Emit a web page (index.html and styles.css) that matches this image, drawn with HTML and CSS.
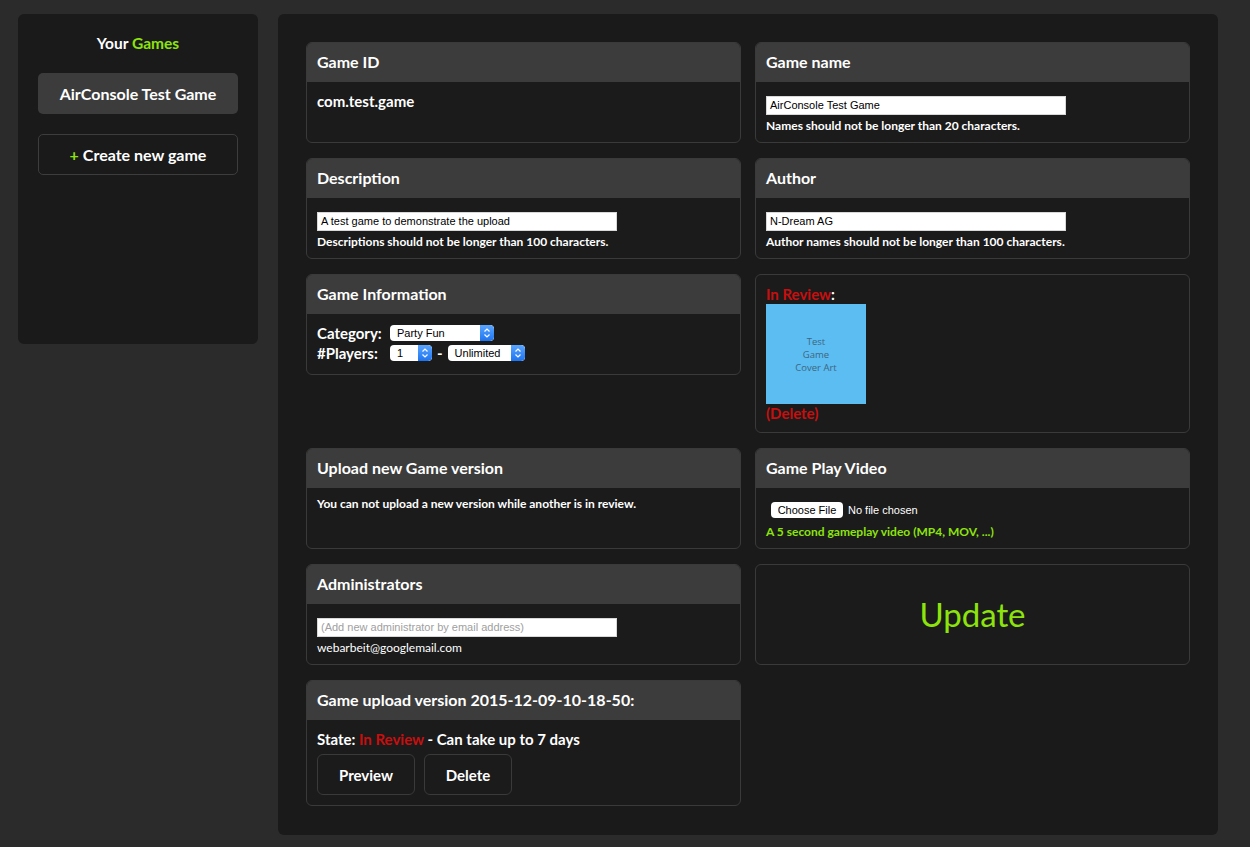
FILE: index.html
```html
<!DOCTYPE html>
<html>
<head>
<meta charset="utf-8">
<link rel="stylesheet" href="styles.css">
</head>
<body>
<div class="page">
  <aside class="sidebar">
    <div class="side-title">Your <span class="green">Games</span></div>
    <div class="side-btn active">AirConsole Test Game</div>
    <div class="side-btn outline"><span class="green plus">+</span> Create new game</div>
  </aside>
  <main class="main">
    <section class="card">
      <div class="card-head">Game ID</div>
      <div class="card-body id-body"><div class="big">com.test.game</div></div>
    </section>
    <section class="card">
      <div class="card-head">Game name</div>
      <div class="card-body">
        <div class="input">AirConsole Test Game</div>
        <div class="hint">Names should not be longer than 20 characters.</div>
      </div>
    </section>
    <section class="card">
      <div class="card-head">Description</div>
      <div class="card-body">
        <div class="input">A test game to demonstrate the upload</div>
        <div class="hint">Descriptions should not be longer than 100 characters.</div>
      </div>
    </section>
    <section class="card">
      <div class="card-head">Author</div>
      <div class="card-body">
        <div class="input">N-Dream AG</div>
        <div class="hint">Author names should not be longer than 100 characters.</div>
      </div>
    </section>
    <section class="card">
      <div class="card-head">Game Information</div>
      <div class="card-body info">
        <div class="info-row">
          <span class="label">Category:</span>
          <span class="select w-cat"><span class="sel-text">Party Fun</span><span class="stepper"><svg width="8" height="12" viewBox="0 0 8 12"><path d="M1.5 4.5 L4 2 L6.5 4.5 M1.5 7.5 L4 10 L6.5 7.5" fill="none" stroke="#fff" stroke-width="1.2"/></svg></span></span>
        </div>
        <div class="info-row">
          <span class="label">#Players:</span>
          <span class="select w-one"><span class="sel-text">1</span><span class="stepper"><svg width="8" height="12" viewBox="0 0 8 12"><path d="M1.5 4.5 L4 2 L6.5 4.5 M1.5 7.5 L4 10 L6.5 7.5" fill="none" stroke="#fff" stroke-width="1.2"/></svg></span></span>
          <span class="dash">-</span>
          <span class="select w-unl"><span class="sel-text">Unlimited</span><span class="stepper"><svg width="8" height="12" viewBox="0 0 8 12"><path d="M1.5 4.5 L4 2 L6.5 4.5 M1.5 7.5 L4 10 L6.5 7.5" fill="none" stroke="#fff" stroke-width="1.2"/></svg></span></span>
        </div>
      </div>
    </section>
    <section class="card plain cover">
      <div class="big"><span class="red">In Review</span>:</div>
      <div class="cover-art">Test<br>Game<br>Cover Art</div>
      <div class="big red">(Delete)</div>
    </section>
    <section class="card">
      <div class="card-head">Upload new Game version</div>
      <div class="card-body notice">
        <div class="hint">You can not upload a new version while another is in review.</div>
      </div>
    </section>
    <section class="card">
      <div class="card-head">Game Play Video</div>
      <div class="card-body">
        <div class="file-row"><span class="file-btn">Choose File</span><span class="file-none">No file chosen</span></div>
        <div class="hint green video-hint">A 5 second gameplay video (MP4, MOV, ...)</div>
      </div>
    </section>
    <section class="card">
      <div class="card-head">Administrators</div>
      <div class="card-body">
        <div class="input placeholder">(Add new administrator by email address)</div>
        <div class="email">webarbeit@googlemail.com</div>
      </div>
    </section>
    <section class="card plain update">
      <div class="update-text">Update</div>
    </section>
    <section class="card">
      <div class="card-head">Game upload version 2015-12-09-10-18-50:</div>
      <div class="card-body version">
        <div class="big">State: <span class="red">In Review</span> - Can take up to 7 days</div>
        <div class="btn-row">
          <span class="btn w-prev">Preview</span>
          <span class="btn w-del">Delete</span>
        </div>
      </div>
    </section>
  </main>
</div>
</body>
</html>
```

FILE: styles.css
```css
* { box-sizing: border-box; }
html, body {
  margin: 0;
  padding: 0;
  background: #2b2b2b;
  color: #ffffff;
  font-family: "Lato", "Open Sans", sans-serif;
  font-weight: 700;
}
.page {
  display: flex;
  align-items: flex-start;
  gap: 20px;
  padding: 14px 0 0 18px;
  min-height: 847px;
}
.green { color: #8de40c; }
.red { color: #c80f0f; }

.sidebar {
  width: 240px;
  height: 330px;
  background: #1a1a1a;
  border-radius: 6px;
  padding: 20px 20px;
  display: flex;
  flex-direction: column;
}
.side-title {
  text-align: center;
  font-size: 15.5px;
  line-height: 18px;
  margin-bottom: 21px;
}
.side-btn {
  height: 41px;
  border-radius: 5px;
  display: flex;
  align-items: center;
  justify-content: center;
  font-size: 16px;
  margin-bottom: 20px;
  padding-bottom: 1px;
}
.side-btn.active { background: #3c3c3c; }
.side-btn.outline { border: 1px solid #3d3d3d; }
.plus { margin-right: 4px; }

.main {
  width: 940px;
  background: #1a1a1a;
  border-radius: 6px;
  padding: 28px 28px 29px 28px;
  display: grid;
  grid-template-columns: 435px 435px;
  column-gap: 14px;
  row-gap: 15px;
  align-items: start;
}
.card {
  border: 1px solid #3a3a3a;
  border-radius: 6px;
  background: #1b1b1b;
  overflow: hidden;
}
.card-head {
  background: #3c3c3c;
  height: 39px;
  padding: 0 10px 2px 10px;
  display: flex;
  align-items: center;
  font-size: 16px;
}
.card-body {
  min-height: 60px;
  padding: 14px 10px 8px 10px;
}
.id-body { padding-top: 10px; }
.big {
  font-size: 15px;
  line-height: 18px;
}
.input {
  width: 300px;
  height: 19px;
  background: #ffffff;
  border: 1px solid #d8d8d8;
  color: #000;
  font-family: "Liberation Sans", Arial, sans-serif;
  font-weight: 400;
  font-size: 11px;
  line-height: 17px;
  padding: 0 3px;
}
.input.placeholder { color: #a0a0a0; }
.hint {
  font-size: 12px;
  line-height: 14px;
  margin-top: 4px;
}
.video-hint { margin-top: 6px; }
.notice { padding-top: 9px; }
.notice .hint { margin-top: 0; }
.email {
  font-size: 12px;
  font-weight: 400;
  line-height: 14px;
  margin-top: 4px;
}
.info { padding-top: 10px; padding-bottom: 0; }
.info-row {
  display: flex;
  align-items: center;
  height: 17px;
  margin-bottom: 3px;
}
.label {
  font-size: 15px;
  width: 73px;
}
.select {
  position: relative;
  height: 16px;
  background: #ffffff;
  border-radius: 4px;
  color: #000;
  font-family: "Liberation Sans", Arial, sans-serif;
  font-weight: 400;
  font-size: 11px;
  display: flex;
  align-items: center;
  justify-content: space-between;
  overflow: hidden;
}
.sel-text { padding-left: 7px; }
.stepper {
  width: 14px;
  height: 16px;
  background: linear-gradient(#5aa6ff, #1d74f0);
  display: flex;
  align-items: center;
  justify-content: center;
  border-radius: 0 4px 4px 0;
}
.w-cat { width: 104px; }
.w-one { width: 42px; }
.w-unl { width: 77px; }
.dash { font-size: 15px; margin: 0 5px 0 5px; }

.plain { background: #1b1b1b; }
.cover {
  padding: 10px 10px 10px 10px;
  min-height: 159px;
}
.cover-art {
  width: 100px;
  height: 100px;
  background: #5bbdf2;
  color: #3f6680;
  font-family: "Open Sans", sans-serif;
  font-weight: 400;
  font-size: 9.5px;
  line-height: 13px;
  text-align: center;
  display: flex;
  align-items: center;
  justify-content: center;
  margin: 1px 0 0 0;
}
.file-row {
  display: flex;
  align-items: center;
  padding-left: 5px;
  height: 18px;
  margin-top: -1px;
}
.file-btn {
  background: #fff;
  color: #000;
  border-radius: 4px;
  font-family: "Liberation Sans", Arial, sans-serif;
  font-weight: 400;
  font-size: 11px;
  height: 16px;
  width: 72px;
  display: flex;
  align-items: center;
  justify-content: center;
}
.file-none {
  font-family: "Liberation Sans", Arial, sans-serif;
  font-weight: 400;
  font-size: 11px;
  margin-left: 5px;
}
.update {
  height: 101px;
  display: flex;
  align-items: center;
  justify-content: center;
}
.update-text {
  color: #8de40c;
  font-size: 33px;
  font-weight: 400;
  padding-bottom: 2px;
}
.version { padding-top: 10px; padding-bottom: 10px; }
.btn-row {
  display: flex;
  gap: 9px;
  margin-top: 6px;
}
.btn {
  height: 41px;
  border: 1px solid #3a3a3a;
  border-radius: 6px;
  display: flex;
  align-items: center;
  justify-content: center;
  font-size: 15px;
}
.w-prev { width: 98px; }
.w-del { width: 88px; }
```
